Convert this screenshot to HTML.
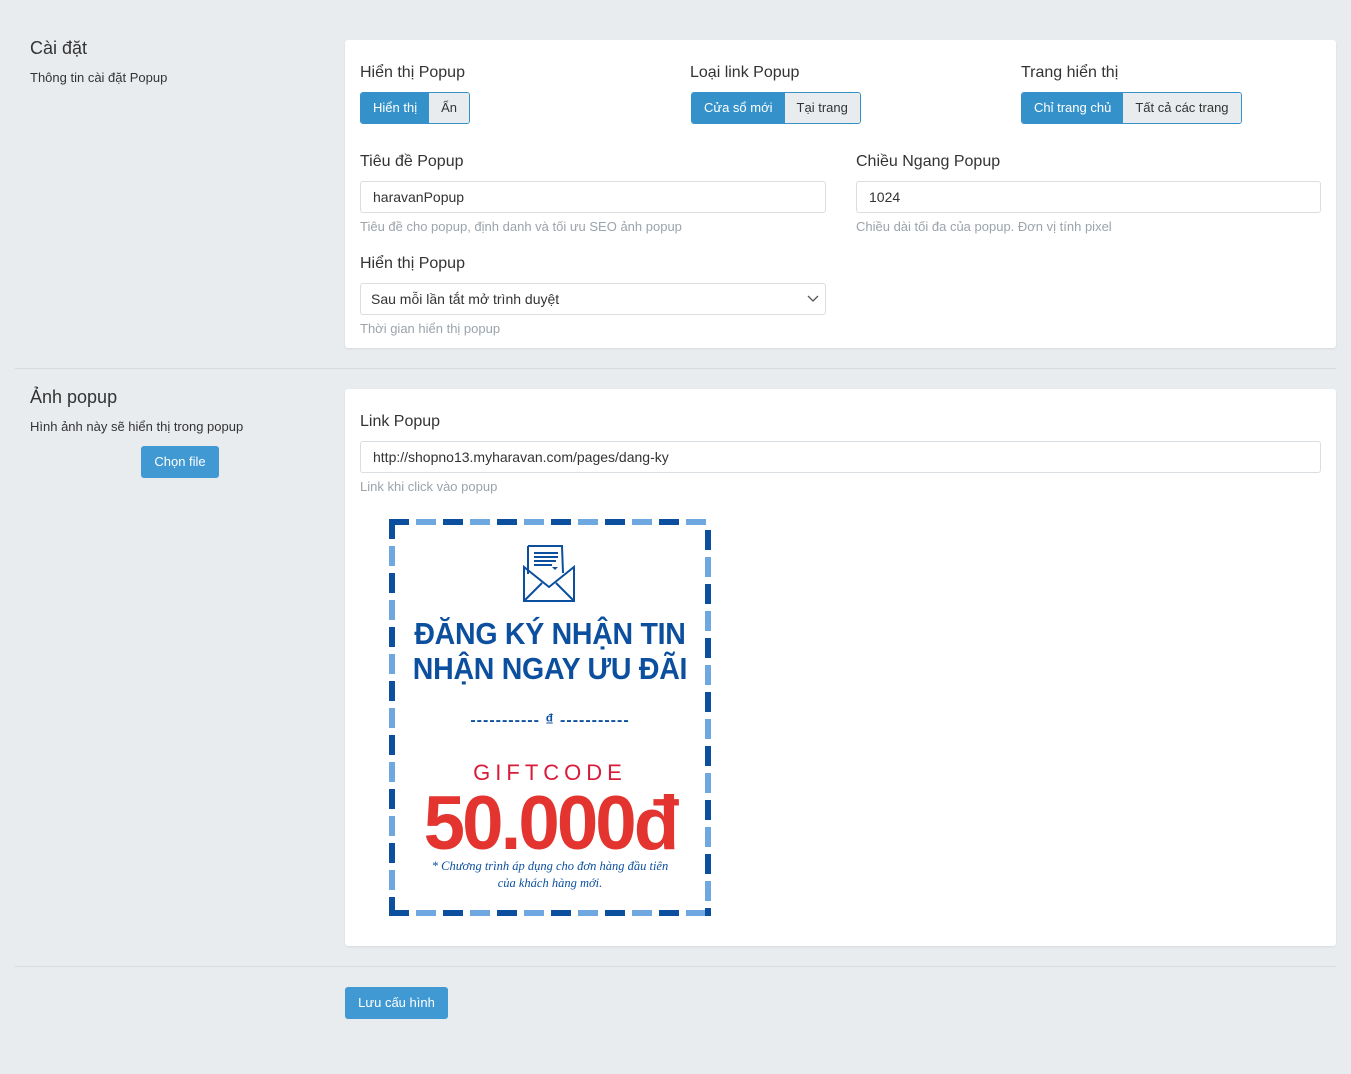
<!DOCTYPE html>
<html><head><meta charset="utf-8"><style>
*{box-sizing:border-box;margin:0;padding:0}
body{width:1351px;height:1074px;background:#e9ecef;font-family:"Liberation Sans",sans-serif;color:#212529;position:relative;overflow:hidden}
.abs{position:absolute}
.h{font-size:18px;color:#333}
.sub{font-size:13px;color:#333}
.card{background:#fff;border-radius:3px;box-shadow:0 1px 2px rgba(0,0,0,.08)}
.lbl{font-size:16px;color:#333}
.help{font-size:13px;color:#9ba3ab}
.inp{border:1px solid #d9dee3;border-radius:3px;height:32px;font-size:14px;padding:0 12px;line-height:30px;color:#333;background:#fff}
.bg{display:flex;border:1px solid #3591c9;border-radius:3px;height:32px;font-size:13px;overflow:hidden}
.bg span{padding:0 12px;line-height:30px;background:#e9ecef;color:#333}
.bg span.on{background:#3591c9;color:#fff}
hr{position:absolute;left:15px;width:1321px;border:0;border-top:1px solid #d6dbe0}
.btn{background:#4099d2;color:#fff;font-size:13px;border-radius:3px;text-align:center;line-height:32px}
.sh{background:repeating-linear-gradient(90deg,#0b4f9e 0 20px,#fff 20px 27px,#6fa8e0 27px 47px,#fff 47px 54px)}
.sv{background:repeating-linear-gradient(180deg,#0b4f9e 0 20px,#fff 20px 27px,#6fa8e0 27px 47px,#fff 47px 54px)}
</style></head><body>
<div class="abs h" style="left:30px;top:38px">Cài đặt</div>
<div class="abs sub" style="left:30px;top:70px">Thông tin cài đặt Popup</div>
<div class="abs card" style="left:345px;top:40px;width:991px;height:308px"></div>
<div class="abs lbl" style="left:360px;top:64px">Hiển thị Popup</div>
<div class="abs bg" style="left:360px;top:92px"><span class="on">Hiển thị</span><span>Ẩn</span></div>
<div class="abs lbl" style="left:690px;top:64px">Loại link Popup</div>
<div class="abs bg" style="left:691px;top:92px"><span class="on">Cửa sổ mới</span><span>Tại trang</span></div>
<div class="abs lbl" style="left:1021px;top:64px">Trang hiển thị</div>
<div class="abs bg" style="left:1021px;top:92px"><span class="on">Chỉ trang chủ</span><span>Tất cả các trang</span></div>
<div class="abs lbl" style="left:360px;top:153px">Tiêu đề Popup</div>
<div class="abs inp" style="left:360px;top:181px;width:466px">haravanPopup</div>
<div class="abs help" style="left:360px;top:219px">Tiêu đề cho popup, định danh và tối ưu SEO ảnh popup</div>
<div class="abs lbl" style="left:856px;top:153px">Chiều Ngang Popup</div>
<div class="abs inp" style="left:856px;top:181px;width:465px">1024</div>
<div class="abs help" style="left:856px;top:219px">Chiều dài tối đa của popup. Đơn vị tính pixel</div>
<div class="abs lbl" style="left:360px;top:255px">Hiển thị Popup</div>
<div class="abs inp" style="left:360px;top:283px;width:466px;padding-left:10px">Sau mỗi lần tắt mở trình duyệt<svg style="position:absolute;right:6px;top:11px" width="12" height="8"><path d="M1 1l5 5 5-5" fill="none" stroke="#555" stroke-width="1.3"/></svg></div>
<div class="abs help" style="left:360px;top:321px">Thời gian hiển thị popup</div>
<hr style="top:368px">
<div class="abs h" style="left:30px;top:387px">Ảnh popup</div>
<div class="abs sub" style="left:30px;top:419px">Hình ảnh này sẽ hiển thị trong popup</div>
<div class="abs btn" style="left:141px;top:446px;width:78px">Chọn file</div>
<div class="abs card" style="left:345px;top:389px;width:991px;height:557px"></div>
<div class="abs lbl" style="left:360px;top:413px">Link Popup</div>
<div class="abs inp" style="left:360px;top:441px;width:961px">http://shopno13.myharavan.com/pages/dang-ky</div>
<div class="abs help" style="left:360px;top:479px">Link khi click vào popup</div>
<div class="abs sh" style="left:389px;top:519px;width:322px;height:6px"></div>
<div class="abs sh" style="left:389px;top:910px;width:322px;height:6px"></div>
<div class="abs sv" style="left:389px;top:519px;width:6px;height:397px"></div>
<div class="abs sv" style="left:705px;top:530px;width:6px;height:386px"></div>
<div class="abs" style="left:395px;top:525px;width:310px;height:385px;background:#fff;text-align:center;color:#0b4f9e">
<svg style="margin-top:18px" width="56" height="60" viewBox="0 0 56 60"><g fill="none" stroke="#0b4f9e" stroke-width="2"><path d="M6 3h34l1 27"/><path d="M6 3l0 28"/><path d="M12 10h24M12 14h24M12 18h22M12 22h18"/><path d="M2 24v34h50V24L27 44Z"/><path d="M2 58l18-18M52 58L34 40"/></g><path d="M30 24l3 3 3-3" fill="#0b4f9e"/></svg>
<div style="font-weight:bold;font-size:31px;line-height:35px;margin-top:8px;letter-spacing:-.3px;transform:scaleX(.92)">ĐĂNG KÝ NHẬN TIN<br>NHẬN NGAY ƯU ĐÃI</div>
<div style="margin-top:26px;font-size:16px;font-weight:bold;letter-spacing:1px">----------- ₫ -----------</div>
<div style="color:#d91b3a;font-size:22px;letter-spacing:5px;margin-top:30px">GIFTCODE</div>
<div style="color:#e3342f;font-size:76px;font-weight:bold;line-height:76px;letter-spacing:-3px;transform:scaleX(.98)">50.000đ</div>
<div style="font-style:italic;font-family:'Liberation Serif',serif;font-size:12.5px;line-height:17px;margin-top:-4px">* Chương trình áp dụng cho đơn hàng đầu tiên<br>của khách hàng mới.</div>
</div>
<hr style="top:966px">
<div class="abs btn" style="left:345px;top:987px;width:103px">Lưu cấu hình</div>
</body></html>
